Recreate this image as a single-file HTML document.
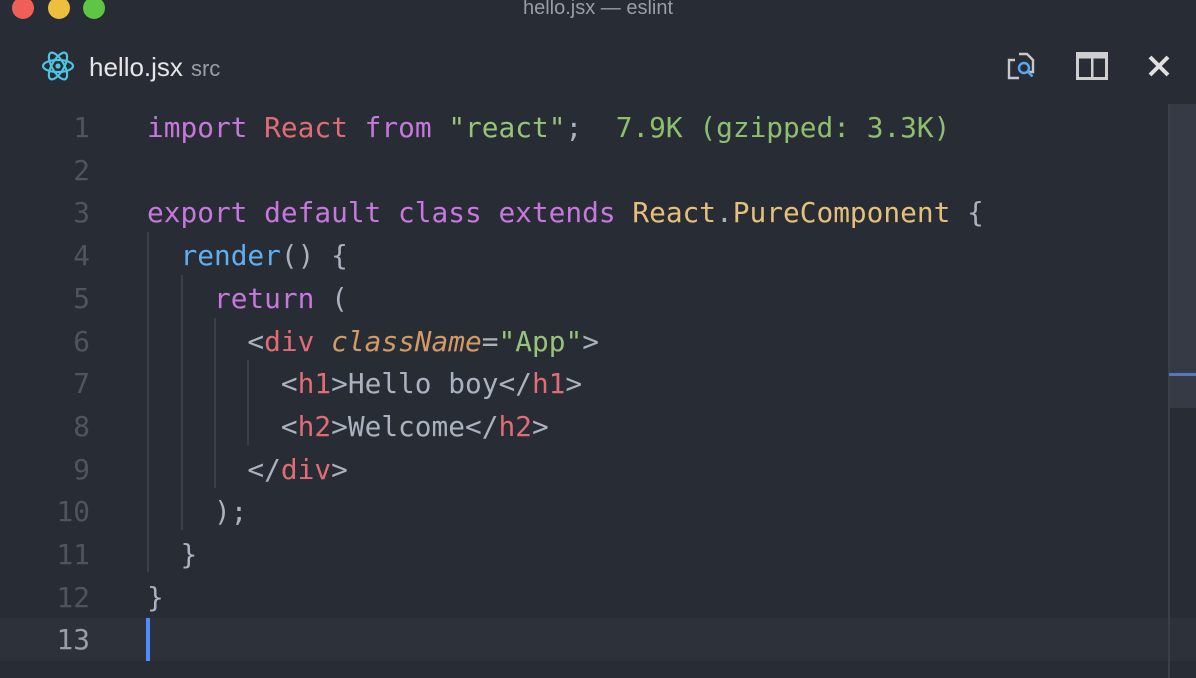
<!DOCTYPE html>
<html><head><meta charset="utf-8"><style>
body{margin:0;width:1196px;height:678px;background:#282c34;overflow:hidden;position:relative;font-family:"Liberation Sans",sans-serif}
.dot{position:absolute;top:-3px;width:22px;height:22px;border-radius:50%}
.title{position:absolute;top:-3px;left:0;width:1196px;text-align:center;color:#9a9da3;font-size:20px}
.tab{position:absolute;top:52px;left:89px;color:#e6e6e6;font-size:26px}
.tab span{color:#9a9da3;font-size:22px;margin-left:8px}
.code{position:absolute;left:0;top:111px;font-family:"DejaVu Sans Mono","Liberation Mono",monospace;font-size:27.8px;white-space:pre;color:#abb2bf}
.ln{position:absolute;left:0;width:90px;text-align:right;color:#4f545d}
.l{position:absolute;left:147px}
.k{color:#c678dd}.r{color:#e06c75}.s{color:#98c379}.f{color:#61afef}.a{color:#d19a66;font-style:italic}.y{color:#e5c07b}.g{color:#8cbf6e}
.guide{position:absolute;width:2px;background:#3b4049}
</style></head><body>
<div class="dot" style="left:12px;background:#ee5f57"></div>
<div class="dot" style="left:48px;background:#ecbf3f"></div>
<div class="dot" style="left:83px;background:#5fc545"></div>
<div class="title">hello.jsx — eslint</div>
<svg style="position:absolute;left:41px;top:50px" width="34" height="32" viewBox="-17 -16 34 32" fill="none" stroke="#4fc3e0" stroke-width="2.2"><ellipse rx="15" ry="6"/><ellipse rx="15" ry="6" transform="rotate(60)"/><ellipse rx="15" ry="6" transform="rotate(120)"/><circle r="2.6" fill="#4fc3e0" stroke="none"/></svg>
<div class="tab">hello.jsx<span>src</span></div>
<svg style="position:absolute;left:1005px;top:50px" width="34" height="34" viewBox="0 0 34 34" fill="none" stroke-width="2.4"><path d="M14 4h8l6 6v12h-4M10 10H4v18h10" stroke="#c8c8c8"/><circle cx="19" cy="18" r="5" stroke="#5aa7f0"/><path d="M22.5 21.5l5 5" stroke="#5aa7f0"/></svg>
<svg style="position:absolute;left:1076px;top:52px" width="32" height="28" viewBox="0 0 32 28"><rect x="1.5" y="1.5" width="29" height="25" fill="none" stroke="#cfcfcf" stroke-width="3"/><rect x="1.5" y="1.5" width="29" height="5" fill="#cfcfcf"/><rect x="15" y="2" width="2.5" height="24" fill="#cfcfcf"/></svg>
<svg style="position:absolute;left:1147px;top:54px" width="24" height="24" viewBox="0 0 24 24"><path d="M3 3l18 18M21 3L3 21" stroke="#e0e0e0" stroke-width="4"/></svg>
<div style="position:absolute;left:0;top:618px;width:1196px;height:43px;background:#2c313a"></div>
<div style="position:absolute;left:1168px;top:104px;width:28px;height:304px;background:#353a44"></div>
<div style="position:absolute;left:1168px;top:104px;width:2px;height:574px;background:#3a3f48"></div>
<div style="position:absolute;left:1169px;top:373px;width:27px;height:3px;background:#5676c0"></div>
<div style="position:absolute;left:146px;top:618px;width:4px;height:43px;background:#528bff"></div>
<div class="guide" style="left:147px;top:232px;height:340px"></div>
<div class="guide" style="left:181px;top:275px;height:255px"></div>
<div class="guide" style="left:214px;top:318px;height:170px"></div>
<div class="guide" style="left:247px;top:360px;height:85px"></div>
<div class="code">
<div class="ln" style="top:0">1</div><div class="l" style="top:0"><span class="k">import</span> <span class="r">React</span> <span class="k">from</span> <span class="s">"react"</span>;  <span class="g">7.9K (gzipped: 3.3K)</span></div>
<div class="ln" style="top:42.7px">2</div>
<div class="ln" style="top:85.4px">3</div><div class="l" style="top:85.4px"><span class="k">export default class extends</span> <span class="y">React</span>.<span class="y">PureComponent</span> {</div>
<div class="ln" style="top:128.1px">4</div><div class="l" style="top:128.1px">  <span class="f">render</span>() {</div>
<div class="ln" style="top:170.8px">5</div><div class="l" style="top:170.8px">    <span class="k">return</span> (</div>
<div class="ln" style="top:213.5px">6</div><div class="l" style="top:213.5px">      &lt;<span class="r">div</span> <span class="a">className</span>=<span class="s">"App"</span>&gt;</div>
<div class="ln" style="top:256.2px">7</div><div class="l" style="top:256.2px">        &lt;<span class="r">h1</span>&gt;Hello boy&lt;/<span class="r">h1</span>&gt;</div>
<div class="ln" style="top:298.9px">8</div><div class="l" style="top:298.9px">        &lt;<span class="r">h2</span>&gt;Welcome&lt;/<span class="r">h2</span>&gt;</div>
<div class="ln" style="top:341.6px">9</div><div class="l" style="top:341.6px">      &lt;/<span class="r">div</span>&gt;</div>
<div class="ln" style="top:384.3px">10</div><div class="l" style="top:384.3px">    );</div>
<div class="ln" style="top:427px">11</div><div class="l" style="top:427px">  }</div>
<div class="ln" style="top:469.7px">12</div><div class="l" style="top:469.7px">}</div>
<div class="ln" style="top:512.4px;color:#9a9ea6">13</div>
</div>
</body></html>
